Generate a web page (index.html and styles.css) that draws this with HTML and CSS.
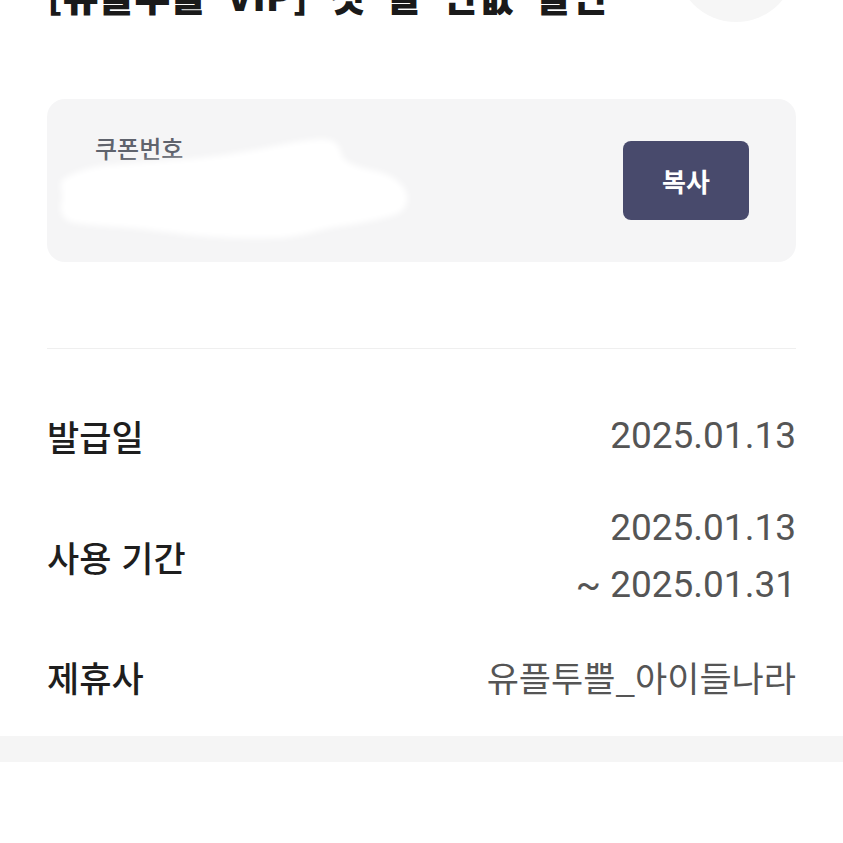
FILE: index.html
```html
<!DOCTYPE html>
<html lang="ko">
<head>
    <meta charset="UTF-8">
    <meta name="viewport" content="width=device-width, initial-scale=1.0">
    <title>쿠폰 상세</title>
    <link rel="stylesheet" href="styles.css">
</head>
<body>

<div class="page">
    <!-- 상단 제목 (스크롤로 일부 잘림) -->
    <div class="header">
        <h1 class="title">[유플투쁠 VIP] 첫 달 반값 할인</h1>
        <div class="round-btn"></div>
    </div>

    <!-- 쿠폰번호 박스 -->
    <div class="coupon-box">
        <div class="coupon-info">
            <div class="coupon-label">쿠폰번호</div>
            <!-- 가려진 쿠폰번호 -->
            <svg class="coupon-mask" width="360" height="110" viewBox="0 0 360 110">
                <path d="M7 45 C20 36 40 31 55 30 C90 27 120 25 145 23 C180 19 205 14 225 10 C245 6 265 3 275 5 C288 9 284 20 290 25 C300 32 312 34 325 37 C340 42 350 50 352 60 C354 70 348 77 340 80 C320 86 300 89 275 93 C258 97 242 102 225 103 C200 104 170 103 145 101 C120 99 100 95 75 93 C50 91 28 90 15 87 C6 83 4 74 7 65 C8 56 4 50 7 45 Z" fill="#fff"/>
            </svg>
        </div>
        <button class="copy-btn">복사</button>
    </div>

    <div class="divider"></div>

    <!-- 상세 정보 -->
    <div class="info-row">
        <div class="info-label">발급일</div>
        <div class="info-value num">2025.01.13</div>
    </div>
    <div class="info-row">
        <div class="info-label">사용 기간</div>
        <div class="info-value num">
            <div>2025.01.13</div>
            <div>~ 2025.01.31</div>
        </div>
    </div>
    <div class="info-row">
        <div class="info-label">제휴사</div>
        <div class="info-value">유플투쁠_아이들나라</div>
    </div>
</div>

<div class="gray-band"></div>

</body>
</html>
```

FILE: styles.css
```css
/* 기본 */
body {
    margin: 0;
    padding: 0;
    background-color: #ffffff;
    color: #222;
    font-family: "Noto Sans CJK KR", "Noto Sans", sans-serif;
    overflow: hidden;
}

.page {
    padding: 0 47px;
}

/* 상단 제목 */
.header {
    display: flex;
    justify-content: space-between;
    align-items: flex-end;
    margin-top: -98px;
}

.title {
    margin: 0 0 6px 0;
    font-size: 39px;
    line-height: 44px;
    font-weight: 800;
    color: #1a1a1a;
    word-spacing: 10px;
    white-space: nowrap;
}

.round-btn {
    width: 120px;
    height: 120px;
    border-radius: 50%;
    background-color: #f6f6f6;
    flex-shrink: 0;
}

/* 쿠폰번호 박스 */
.coupon-box {
    margin-top: 77px;
    height: 163px;
    box-sizing: border-box;
    padding: 0 47px 0 48px;
    background-color: #f5f5f6;
    border-radius: 18px;
    display: flex;
    justify-content: space-between;
    align-items: center;
}

.coupon-info {
    align-self: flex-start;
    padding-top: 34px;
}

.coupon-label {
    font-size: 24px;
    line-height: 30px;
    font-weight: 500;
    color: #5f636d;
}

.coupon-mask {
    display: block;
    margin: -28px 0 0 -40px;
    filter: blur(3px);
}

.copy-btn {
    width: 126px;
    height: 79px;
    border: none;
    border-radius: 8px;
    background-color: #484a6c;
    color: #fff;
    font-family: "Noto Sans CJK KR", sans-serif;
    font-size: 26px;
    font-weight: 700;
    cursor: pointer;
}

.divider {
    height: 1px;
    background-color: #efefef;
    margin-top: 86px;
}

/* 상세 정보 */
.info-row {
    display: flex;
    justify-content: space-between;
    align-items: center;
    margin-top: 35px;
}

.divider + .info-row {
    margin-top: 58px;
}

.info-label {
    font-size: 35px;
    line-height: 57px;
    font-weight: 500;
    color: #1e1e1e;
}

.info-value {
    font-size: 35px;
    line-height: 57px;
    color: #555;
    text-align: right;
}

.num {
    font-family: Roboto, "Noto Sans CJK KR", sans-serif;
    font-size: 37px;
}

.gray-band {
    height: 26px;
    background-color: #f5f5f5;
    margin-top: 31px;
}
```
